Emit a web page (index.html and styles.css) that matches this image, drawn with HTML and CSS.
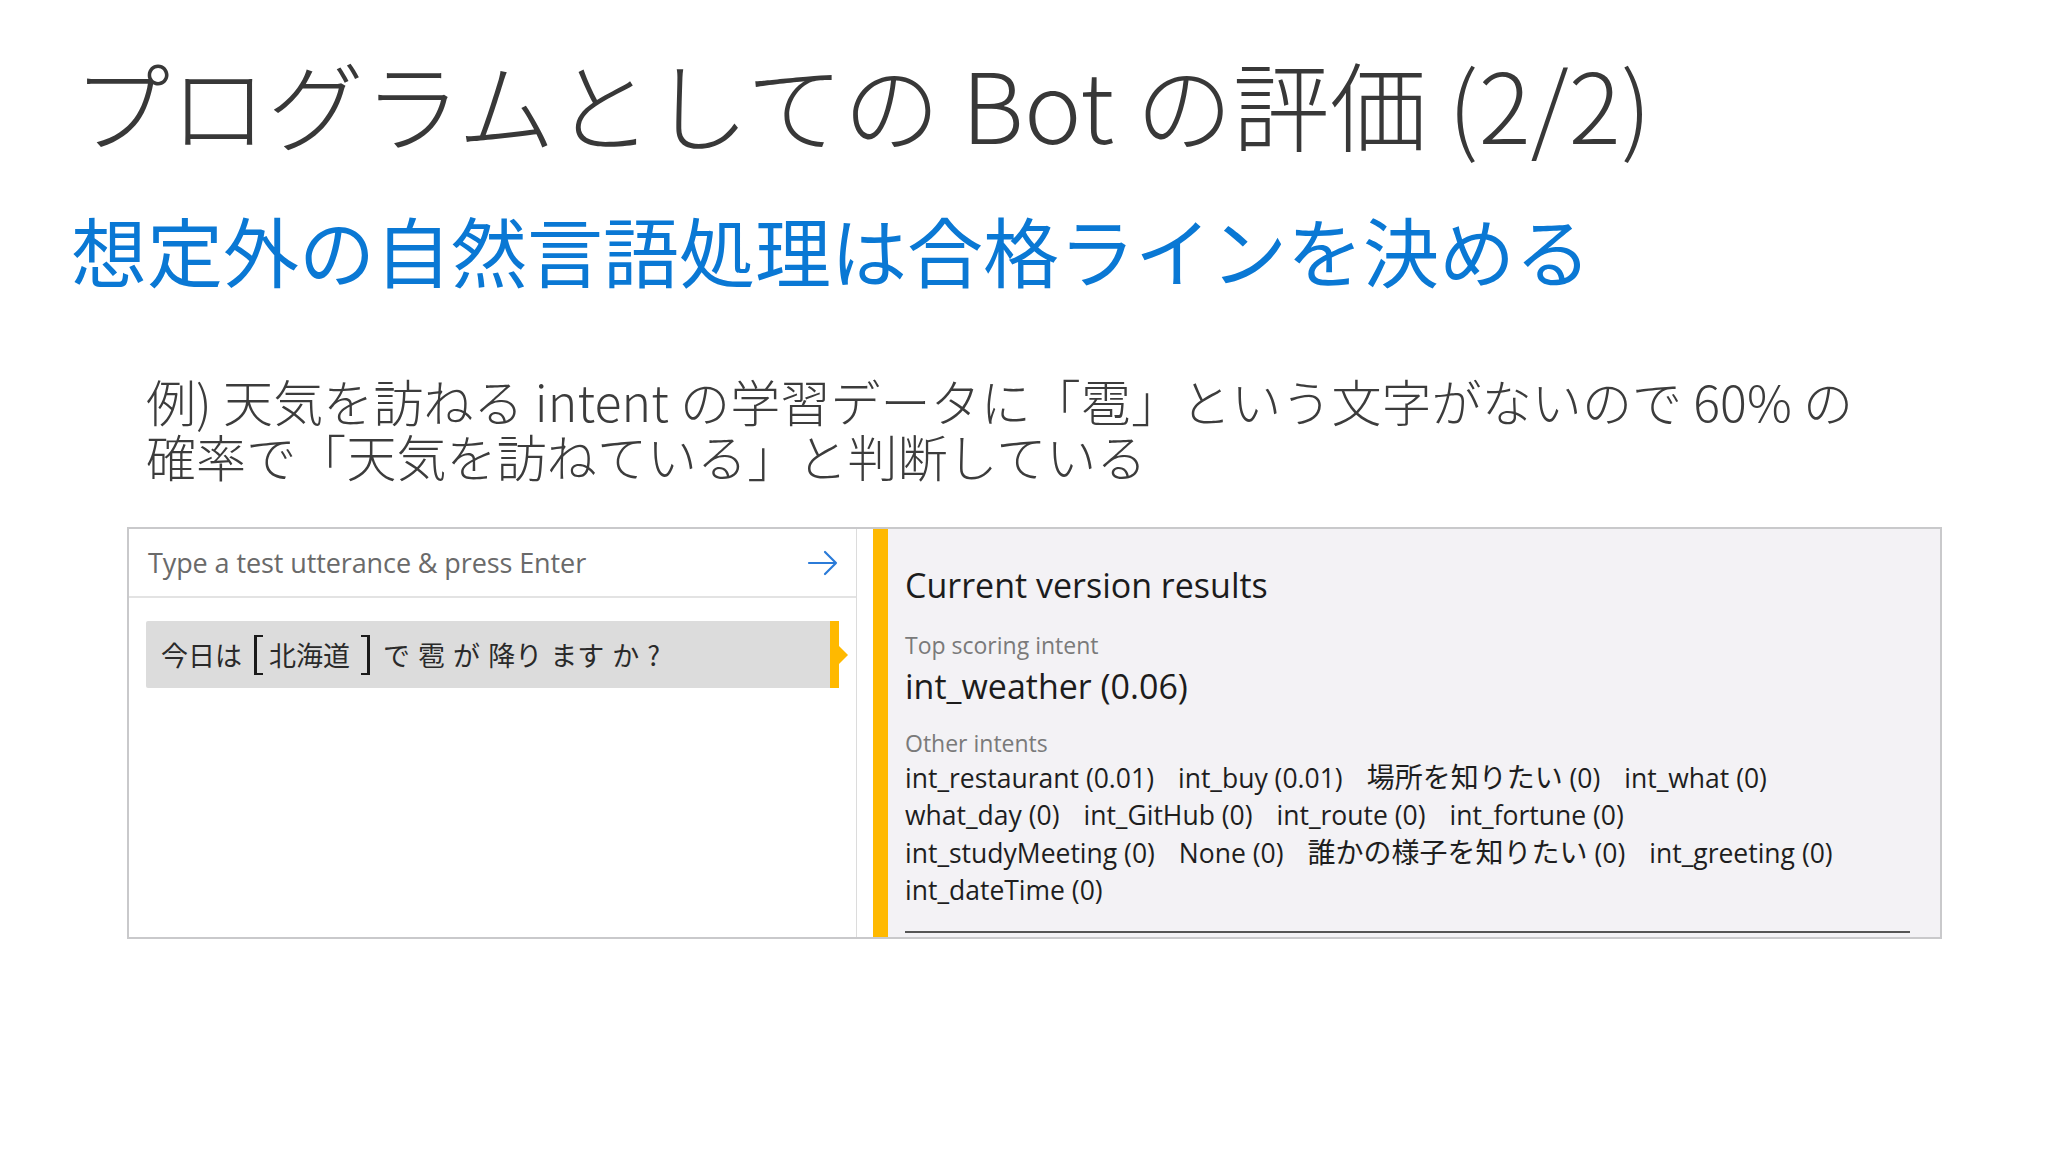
FILE: index.html
```html
<!DOCTYPE html>
<html lang="ja">
<head>
<meta charset="utf-8">
<title>プログラムとしての Bot の評価 (2/2)</title>
<link rel="stylesheet" href="styles.css">
</head>
<body>
<div class="slide">
  <h1 class="title">プログラムとしての Bot の評価 (2/2)</h1>
  <h2 class="subtitle">想定外の自然言語処理は合格ラインを決める</h2>
  <p class="body-text"><span class="line">例) 天気を訪ねる intent の学習データに「雹」という文字がないので 60% の</span><span class="line">確率で「天気を訪ねている」と判断している</span></p>

  <div class="panel">
    <div class="left-pane">
      <div class="input-row">
        <span class="placeholder">Type a test utterance &amp; press Enter</span>
        <svg class="arrow" width="32" height="28" viewBox="0 0 32 28" aria-hidden="true">
          <path d="M2 14 H29 M18 3 L29 14 L18 25" fill="none" stroke="#2b7bd8" stroke-width="2.2" stroke-linecap="round" stroke-linejoin="round"/>
        </svg>
      </div>
      <div class="utterance">
        <div class="utt-text">今日は<span class="entity">北海道</span>で 雹 が 降り ます か ?</div>
        <div class="marker"></div>
      </div>
    </div>
    <div class="gap"></div>
    <div class="yellow-bar"></div>
    <div class="right-pane">
      <div class="results-title">Current version results</div>
      <div class="label label-top">Top scoring intent</div>
      <div class="top-intent">int_weather (0.06)</div>
      <div class="label label-other">Other intents</div>
      <div class="intents">
        <div class="intent-line"><span>int_restaurant (0.01)</span><span>int_buy (0.01)</span><span><span class="ja">場所を知りたい</span> (0)</span><span>int_what (0)</span></div>
        <div class="intent-line"><span>what_day (0)</span><span>int_GitHub (0)</span><span>int_route (0)</span><span>int_fortune (0)</span></div>
        <div class="intent-line"><span>int_studyMeeting (0)</span><span>None (0)</span><span><span class="ja">誰かの様子を知りたい</span> (0)</span><span>int_greeting (0)</span></div>
        <div class="intent-line"><span>int_dateTime (0)</span></div>
      </div>
      <div class="rule"></div>
    </div>
  </div>
</div>
</body>
</html>
```

FILE: styles.css
```css
html, body {
  margin: 0;
  padding: 0;
  background: #ffffff;
}

.slide {
  width: 2048px;
  height: 1152px;
  overflow: hidden;
  font-family: "Noto Sans CJK JP", "Noto Sans", sans-serif;
}

.title {
  margin: 54px 0 0 73px;
  font-size: 97px;
  line-height: 96px;
  font-weight: 300;
  color: #383838;
  white-space: nowrap;
}

.subtitle {
  margin: 61px 0 0 71px;
  font-size: 76px;
  line-height: 76px;
  font-weight: 400;
  color: #0a78d4;
  white-space: nowrap;
}

.body-text {
  margin: 86px 0 0 146px;
  font-size: 50px;
  line-height: 55px;
  font-weight: 300;
  color: #3c3c3c;
  white-space: nowrap;
}

.body-text .line {
  display: block;
  letter-spacing: 0.1px;
}

.panel {
  margin: 44px 0 0 127px;
  width: 1815px;
  height: 412px;
  box-sizing: border-box;
  border: 2px solid #c9c9cb;
  display: flex;
  font-family: "Open Sans", "Noto Sans CJK JP", sans-serif;
}

.left-pane {
  width: 727px;
  flex: none;
  background: #ffffff;
  border-right: 1px solid #dcdcdc;
  display: flex;
  flex-direction: column;
}

.input-row {
  height: 67px;
  border-bottom: 2px solid #e3e3e3;
  display: flex;
  align-items: center;
  justify-content: space-between;
  padding: 0 17px 0 19px;
}

.placeholder {
  font-size: 27px;
  color: #6a6a6a;
  letter-spacing: -0.1px;
}

.arrow {
  display: block;
}

.utterance {
  margin: 23px 0 0 17px;
  height: 67px;
  display: flex;
  width: 693px;
}

.utt-text {
  flex: 1;
  background: #dcdcdc;
  border-radius: 2px 0 0 2px;
  display: flex;
  align-items: center;
  padding-left: 15px;
  font-family: "Noto Sans CJK JP", sans-serif;
  font-size: 27px;
  color: #2a2a2a;
  white-space: pre;
  word-spacing: 2px;
}

.entity {
  display: inline-flex;
  align-items: center;
  height: 40px;
  padding: 0 20px 0 15px;
  margin: 0 13px 0 12px;
  position: relative;
}

.entity::before,
.entity::after {
  content: "";
  position: absolute;
  top: 0;
  width: 9px;
  height: 40px;
  border: 2px solid #1a1a1a;
  border-width: 2px 2px 2px 3px;
  box-sizing: border-box;
}

.entity::before {
  left: 0;
  border-right: none;
}

.entity::after {
  right: 0;
  border-width: 2px 3px 2px 2px;
  border-left: none;
}

.marker {
  width: 9px;
  flex: none;
  background: #ffb900;
  position: relative;
}

.marker::after {
  content: "";
  position: absolute;
  left: 9px;
  top: 50%;
  margin-top: -9px;
  border-left: 9px solid #ffb900;
  border-top: 9px solid transparent;
  border-bottom: 9px solid transparent;
}

.gap {
  width: 16px;
  flex: none;
  background: #ffffff;
}

.yellow-bar {
  width: 15px;
  flex: none;
  background: #ffb900;
}

.right-pane {
  flex: 1;
  background: #f3f2f5;
  padding: 0 30px 0 17px;
  display: flex;
  flex-direction: column;
  color: #1e1e1e;
}

.results-title {
  margin-top: 34px;
  font-size: 34px;
  line-height: 44px;
  color: #1c1c1c;
}

.label {
  font-size: 23px;
  line-height: 30px;
  color: #7a7a7a;
}

.label-top {
  margin-top: 23px;
}

.top-intent {
  margin-top: 6px;
  font-size: 34px;
  line-height: 40px;
  color: #1c1c1c;
}

.label-other {
  margin-top: 22px;
}

.intents {
  margin-top: 1px;
}

.intent-line {
  font-size: 26.5px;
  line-height: 37.7px;
  height: 37.7px;
  color: #1e1e1e;
  white-space: nowrap;
}

.intent-line > span {
  margin-right: 24px;
}

.intent-line .ja {
  font-size: 28px;
}

.rule {
  margin-top: 21px;
  height: 2px;
  background: #555555;
}
```
